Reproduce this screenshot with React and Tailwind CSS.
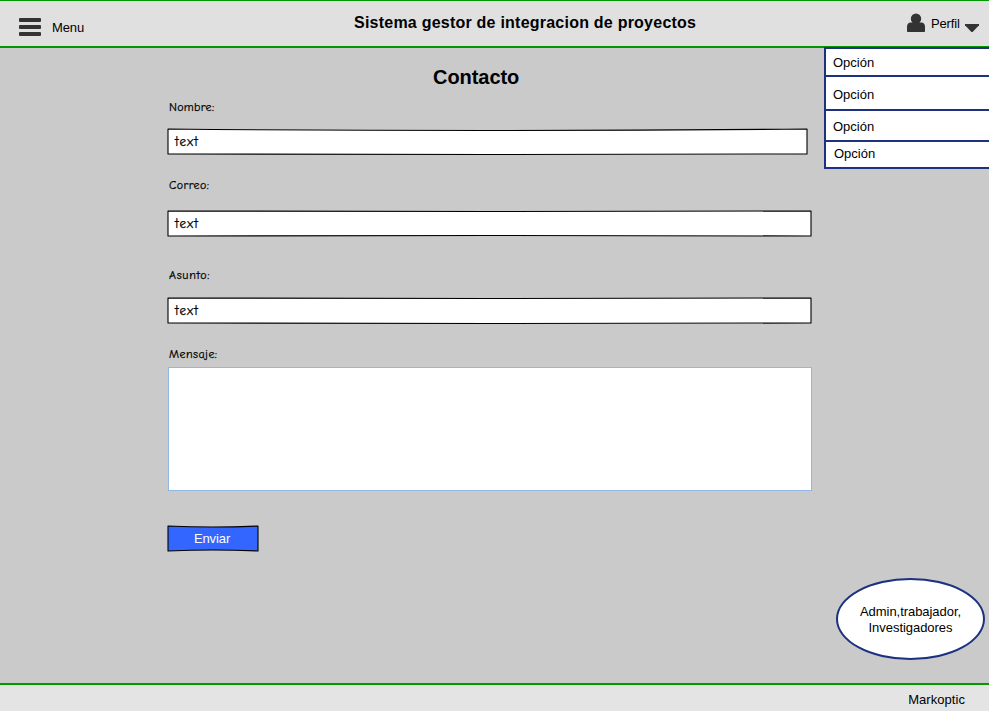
import React from "react";

const HAND = "font-['Comic_Sans_MS','Comic_Neue',Lato,cursive] [-webkit-text-stroke:0.25px_#000]";

function SketchBox({ width, topBend, bottomBend, fill }) {
  const r = width - 1;
  const m = width / 2;
  const d = `M1 1 Q${m} ${1 + topBend} ${r} 1 L${r} 26 Q${m} ${26 + bottomBend} 1 26 Z`;
  return (
    <svg className="absolute inset-0" width={width} height="28" viewBox={`0 0 ${width} 28`} aria-hidden="true">
      <path d={d} fill={fill} stroke="#000" strokeWidth="1.1" strokeLinejoin="round" />
    </svg>
  );
}

function Field({ label, width, topBend, bottomBend, labelClass, boxClass }) {
  return (
    <div>
      <div className={`${HAND} ml-0.5 h-4 text-[12px] leading-4 ${labelClass}`}>{label}</div>
      <div className={`relative h-7 ${boxClass}`}>
        <SketchBox width={width} topBend={topBend} bottomBend={bottomBend} fill="#fff" />
        <span className={`${HAND} relative block pl-[8px] text-[13px] leading-[27px] tracking-[1.1px]`}>text</span>
      </div>
    </div>
  );
}

function Option({ className }) {
  return (
    <li className={`flex items-center border-b-2 border-[#1c3180] ${className}`}>Opción</li>
  );
}

export default function App() {
  return (
    <div className="relative flex h-[711px] w-[989px] flex-col overflow-hidden bg-[#cacaca] font-['Liberation_Sans',Arial,sans-serif] text-[13px] text-black">
      <header className="flex h-12 shrink-0 border-t border-b-2 border-t-[#009900] border-b-[#009900] bg-[#e0e0e0]">
        <div className="flex w-[354px] pl-[19px]">
          <div className="mt-[17px] flex flex-col gap-[3px]">
            <span className="h-1 w-[22px] rounded-[1px] bg-[#333]" />
            <span className="h-1 w-[22px] rounded-[1px] bg-[#333]" />
            <span className="h-1 w-[22px] rounded-[1px] bg-[#333]" />
          </div>
          <span className="mt-[19px] ml-[11px] leading-4 tracking-[-0.1px]">Menu</span>
        </div>
        <h1 className="mt-[13px] w-[553px] text-[16px] leading-[18px] font-bold tracking-[0.23px] whitespace-nowrap">
          Sistema gestor de integracion de proyectos
        </h1>
        <svg className="mt-[12px] shrink-0" width="18" height="19" viewBox="0 0 18 19" fill="#333" aria-hidden="true">
          <circle cx="9" cy="5.7" r="5.2" />
          <path d="M3.800 9.500H14.200Q18 9.800 18 13.600V18.200Q18 19 17.200 19H.8Q0 19 0 18.200V13.600Q0 9.800 3.800 9.500Z" />
        </svg>
        <span className="mt-[15px] ml-[6px] leading-4 tracking-[-0.15px]">Perfil</span>
        <svg className="mt-[23px] ml-[5px] shrink-0" width="14" height="8" viewBox="0 0 14 8" fill="#333" aria-hidden="true">
          <path d="M0 0H14V1.300L7.600 8H6.400L0 1.300Z" />
        </svg>
      </header>

      <main className="flex grow flex-col pl-[167px]">
        <h2 className="mt-[17px] ml-[266px] h-6 text-[20px] leading-6 font-bold tracking-[-0.05px]">Contacto</h2>
        <Field label="Nombre:" width={641} topBend={3} bottomBend={1} labelClass="mt-[10px] tracking-[0.3px]" boxClass="mt-[13px]" />
        <Field label="Correo:" width={645} topBend={1} bottomBend={-1} labelClass="mt-[21px] tracking-[0.4px]" boxClass="mt-[17px]" />
        <Field label="Asunto:" width={645} topBend={1} bottomBend={1} labelClass="mt-[29px] tracking-[0.7px]" boxClass="mt-[14px]" />
        <div className={`${HAND} mt-[21px] ml-0.5 h-4 text-[12px] leading-4 tracking-[0.45px]`}>Mensaje:</div>
        <div className="mt-[5px] ml-px h-[124px] w-[644px] border border-[#94b6e4] bg-white" />
        <button className="relative mt-[34px] block h-7 w-[92px] text-white">
          <SketchBox width={92} topBend={2} bottomBend={-2} fill="#3366ff" />
          <span className="relative -top-px block pr-[2px] text-center leading-[27px] tracking-[-0.1px]">Enviar</span>
        </button>
      </main>

      <footer className="flex h-7 shrink-0 justify-end border-t-2 border-[#009900] bg-[#e4e4e4] pr-6">
        <span className="mt-[7px] leading-4 tracking-[0.05px]">Markoptic</span>
      </footer>

      <ul className="absolute top-[47px] right-0 w-[165px] border-t-2 border-l-2 border-[#1c3180] bg-white">
        <Option className="h-7 pt-[2px] pl-[7px]" />
        <Option className="h-[34px] pt-[4px] pl-[7px]" />
        <Option className="h-[31px] pt-[2px] pl-[7px]" />
        <Option className="h-[27px] pb-[2px] pl-[8px]" />
      </ul>

      <div className="absolute top-[578px] left-[836px] flex h-[82px] w-[149px] items-center justify-center rounded-[50%] border-2 border-[#1c3180] bg-white pt-[2px] text-center leading-4">
        <p className="tracking-[-0.05px] whitespace-nowrap">Admin,trabajador,<br />Investigadores</p>
      </div>
    </div>
  );
}
